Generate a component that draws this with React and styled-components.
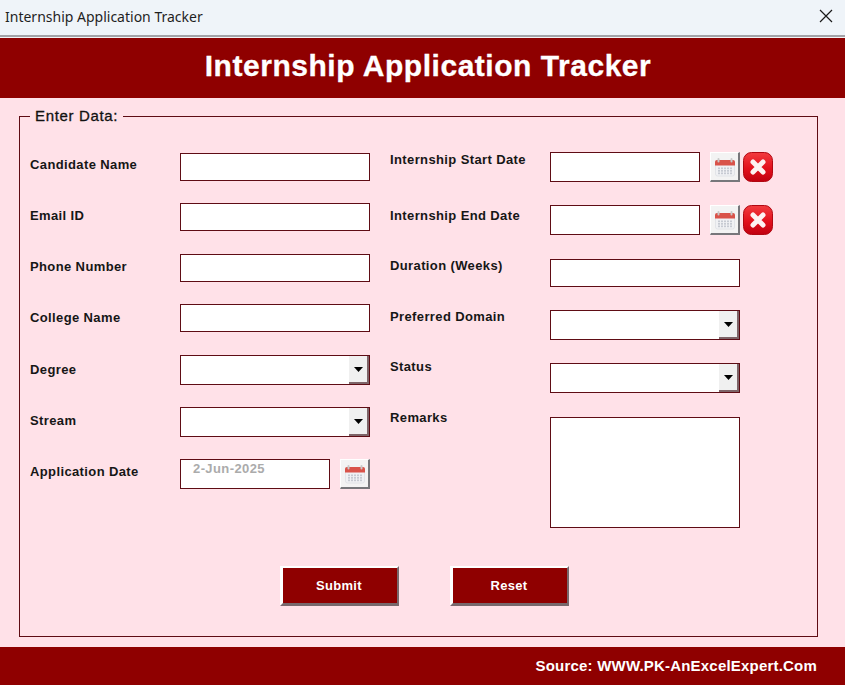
import React from "react";
import styled, { createGlobalStyle } from "styled-components";

const GlobalStyle = createGlobalStyle`
  html, body {
    margin: 0;
    padding: 0;
    background: #ffe1e8;
  }
  * {
    box-sizing: border-box;
  }
`;

const MAROON = "#8f0000";
const LINE = "#5e0c14";

const leftFields = [
  { label: "Candidate Name", top: 0, labelTop: 4 },
  { label: "Email ID", top: 22, labelTop: 5 },
  { label: "Phone Number", top: 23, labelTop: 5 },
  { label: "College Name", top: 22, labelTop: 6 },
  { label: "Degree", top: 23, labelTop: 7, type: "select" },
  { label: "Stream", top: 22, labelTop: 6, type: "select" },
  { label: "Application Date", top: 22, labelTop: 5, type: "date" },
];

const rightFields = [
  { label: "Internship Start Date", top: 0, labelTop: 0, type: "range" },
  { label: "Internship End Date", top: 23, labelTop: 3, type: "range" },
  { label: "Duration (Weeks)", top: 24, labelTop: -1 },
  { label: "Preferred Domain", top: 23, labelTop: -1, type: "select" },
  { label: "Status", top: 23, labelTop: -4, type: "select" },
  { label: "Remarks", top: 24, labelTop: -7, type: "area" },
];

const gridCells = [10.5, 13, 15.5].flatMap((y) =>
  [4, 7, 10, 13, 16].map((x) => ({ x, y })),
);

const CalendarIcon = () => (
  <svg width="22" height="20" viewBox="0 0 22 20">
    <rect x="1.500" y="3.500" width="19" height="15.500" rx="2" fill="#f0f1f4" stroke="#e2e4e8" />
    <path d="M1 8.500V5a2 2 0 0 1 2-2h16a2 2 0 0 1 2 2v3.500z" fill="#d9534a" />
    <rect x="3.500" y="1" width="2" height="4.500" rx="1" fill="#c9c9c9" />
    <rect x="16.500" y="1" width="2" height="4.500" rx="1" fill="#c9c9c9" />
    {gridCells.map((c) => (
      <rect key={`${c.x}-${c.y}`} x={c.x} y={c.y} width="2" height="1.700" fill="#c6cad2" />
    ))}
  </svg>
);

const ClearIcon = () => (
  <svg width="30" height="30" viewBox="0 0 30 30">
    <defs>
      <linearGradient id="clearFill" x1="0" y1="0" x2="0" y2="1">
        <stop offset="0" stopColor="#f23b3f" />
        <stop offset="0.55" stopColor="#e2101c" />
        <stop offset="1" stopColor="#c00010" />
      </linearGradient>
    </defs>
    <rect x="0.500" y="0.500" width="29" height="29" rx="8" fill="url(#clearFill)" stroke="#b00812" />
    <path d="M10 10l10 10M20 10L10 20" stroke="#fdf2f2" strokeWidth="5" strokeLinecap="round" />
  </svg>
);

const ArrowIcon = () => (
  <svg width="9" height="5" viewBox="0 0 9 5">
    <path d="M0 0h9L4.500 5z" fill="#000" />
  </svg>
);

const renderControl = (type) => {
  if (type === "select") {
    return (
      <Select>
        <DropButton>
          <ArrowIcon />
        </DropButton>
      </Select>
    );
  }
  if (type === "date") {
    return (
      <ControlRow>
        <DateInput>2-Jun-2025</DateInput>
        <PickerButton>
          <CalendarIcon />
        </PickerButton>
      </ControlRow>
    );
  }
  if (type === "range") {
    return (
      <ControlRow>
        <RangeInput />
        <PickerButton>
          <CalendarIcon />
        </PickerButton>
        <ClearButton>
          <ClearIcon />
        </ClearButton>
      </ControlRow>
    );
  }
  if (type === "area") return <Remarks />;
  return <TextInput />;
};

const Field = ({ label, top, labelTop, type, labelWidth }) => (
  <Row $top={top}>
    <Label $top={labelTop} $width={labelWidth}>
      {label}
    </Label>
    {renderControl(type)}
  </Row>
);

const App = () => (
  <Page>
    <GlobalStyle />
    <TitleBar>
      <WindowTitle>Internship Application Tracker</WindowTitle>
      <CloseIcon width="14" height="14" viewBox="0 0 14 14">
        <path d="M1 1l12 12M13 1L1 13" stroke="#1a1a1a" strokeWidth="1.200" />
      </CloseIcon>
    </TitleBar>
    <Divider />
    <Header>Internship Application Tracker</Header>
    <Main>
      <Group>
        <Legend>Enter Data:</Legend>
        <Columns>
          <Column $top={28} $width={340}>
            {leftFields.map((f) => (
              <Field key={f.label} labelWidth={150} {...f} />
            ))}
          </Column>
          <Column $top={27} $width={390}>
            {rightFields.map((f) => (
              <Field key={f.label} labelWidth={160} {...f} />
            ))}
          </Column>
        </Columns>
        <Actions>
          <ActionButton>Submit</ActionButton>
          <ActionButton>Reset</ActionButton>
        </Actions>
      </Group>
    </Main>
    <Footer>Source: WWW.PK-AnExcelExpert.Com</Footer>
  </Page>
);

const Page = styled.div`
  width: 845px;
  height: 685px;
  overflow: hidden;
  display: flex;
  flex-direction: column;
  background: #ffe1e8;
  font-family: "Liberation Sans", Arial, sans-serif;
`;

const TitleBar = styled.div`
  height: 35px;
  flex: none;
  display: flex;
  align-items: flex-start;
  justify-content: space-between;
  padding: 0 12px 0 5px;
  background: #eff4f9;
`;

const Divider = styled.div`
  height: 3px;
  flex: none;
  background: linear-gradient(#a3a3a8 66%, #f4f4f6 66%);
`;

const WindowTitle = styled.span`
  font-family: "Noto Sans", "Open Sans", sans-serif;
  font-size: 14px;
  line-height: 34px;
  color: #1f1f1f;
`;

const CloseIcon = styled.svg`
  margin-top: 9px;
`;

const Header = styled.h1`
  height: 60px;
  flex: none;
  margin: 0;
  padding-left: 11px;
  background: ${MAROON};
  color: #fff;
  font-size: 30px;
  font-weight: 700;
  letter-spacing: 0.53px;
  line-height: 56px;
  text-align: center;
  -webkit-text-stroke: 0.3px #fff;
`;

const Main = styled.main`
  flex: 1;
  padding: 9px 27px 10px 19px;
  display: flex;
`;

const Group = styled.fieldset`
  flex: 1;
  min-width: 0;
  margin: 0;
  padding: 0 0 0 10px;
  border: 1px solid ${LINE};
  display: flex;
  flex-direction: column;
`;

const Legend = styled.legend`
  margin-left: 0;
  padding: 0 5px;
  font-size: 15px;
  line-height: 18px;
  letter-spacing: 0.65px;
  font-weight: 400;
  color: #111;
  -webkit-text-stroke: 0.3px #111;
`;

const Columns = styled.div`
  display: flex;
  gap: 20px;
  height: 425px;
`;

const Column = styled.div`
  width: ${(p) => p.$width}px;
  flex: none;
  padding-top: ${(p) => p.$top}px;
  display: flex;
  flex-direction: column;
`;

const Row = styled.div`
  display: flex;
  align-items: flex-start;
  margin-top: ${(p) => p.$top}px;
`;

const Label = styled.label`
  width: ${(p) => p.$width}px;
  flex: none;
  margin-top: ${(p) => p.$top}px;
  font-size: 13px;
  line-height: 16px;
  font-weight: 700;
  letter-spacing: 0.38px;
  color: #161616;
`;

const TextInput = styled.div`
  width: 190px;
  height: 28px;
  background: #fff;
  border: 1px solid ${LINE};
`;

const ControlRow = styled.div`
  display: flex;
  align-items: flex-start;
  gap: 10px;
`;

const RangeInput = styled(TextInput)`
  width: 150px;
  height: 30px;
`;

const DateInput = styled(TextInput)`
  width: 150px;
  height: 30px;
  padding-left: 12px;
  font-size: 13px;
  font-weight: 700;
  line-height: 18px;
  letter-spacing: 0.4px;
  color: #ababab;
`;

const Select = styled(TextInput)`
  height: 30px;
  display: flex;
  justify-content: flex-end;
`;

const DropButton = styled.div`
  width: 20px;
  height: 28px;
  display: flex;
  align-items: center;
  justify-content: center;
  background: #f0f0f0;
  border-right: 2px solid #7d6468;
  border-bottom: 2px solid #7d6468;
`;

const PickerButton = styled.div`
  width: 30px;
  height: 30px;
  display: flex;
  align-items: center;
  justify-content: center;
  background: #f3f3f3;
  border-style: solid;
  border-width: 1px 2px 2px 1px;
  border-color: #fff #77777b #77777b #fff;
`;

const ClearButton = styled.div`
  display: flex;
  margin-left: -7px;
`;

const Remarks = styled(TextInput)`
  height: 111px;
`;

const Actions = styled.div`
  display: flex;
  gap: 51px;
  margin-top: 16px;
  padding-left: 250px;
`;

const ActionButton = styled.button`
  width: 119px;
  height: 40px;
  padding: 0 2px 0 0;
  background: ${MAROON};
  color: #fff;
  font-family: inherit;
  font-size: 13px;
  font-weight: 700;
  letter-spacing: 0.3px;
  border-style: solid;
  border-width: 2px 2px 3px 3px;
  border-color: #fff #77686c #77686c #fff;
`;

const Footer = styled.footer`
  height: 38px;
  flex: none;
  padding-right: 28px;
  background: ${MAROON};
  color: #fff;
  font-size: 15px;
  font-weight: 700;
  letter-spacing: 0.2px;
  line-height: 38px;
  text-align: right;
`;

export default App;
